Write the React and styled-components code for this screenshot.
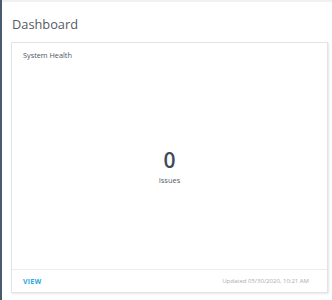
import styled, { createGlobalStyle } from 'styled-components'

const Global = createGlobalStyle`
  html, body {
    margin: 0;
    padding: 0;
    background: #fff;
    font-family: 'Open Sans', 'Noto Sans', sans-serif;
  }
`

const Page = styled.div`
  display: flex;
  width: 332px;
  height: 300px;
  overflow: hidden;
`

const SideEdge = styled.div`
  width: 2px;
  flex-shrink: 0;
  background: #4b5b6e;
`

const Main = styled.div`
  flex: 1;
  display: flex;
  flex-direction: column;
  border-top: 2px solid #f1f1f1;
  padding: 0 4px 7px 9px;
`

const Title = styled.h1`
  margin: 0;
  padding: 14px 0 0 1px;
  height: 26px;
  font-size: 12.8px;
  line-height: 17px;
  font-weight: 400;
  color: #555b63;
`

const Card = styled.section`
  flex: 1;
  display: flex;
  flex-direction: column;
  border: 1px solid #e4e4e4;
  box-shadow: 1px 1px 2px rgba(0, 0, 0, 0.1);
  background: #fff;
`

const CardBody = styled.div`
  flex: 1;
  display: flex;
  flex-direction: column;
  padding: 7px 11px;
`

const CardTitle = styled.div`
  font-size: 7.3px;
  line-height: 10px;
  color: #4d5560;
`

const Metric = styled.div`
  flex: 1;
  display: flex;
  flex-direction: column;
  align-items: center;
  justify-content: center;
  padding-top: 8px;
`

const Value = styled.div`
  font-size: 21px;
  font-weight: 600;
  line-height: 29px;
  color: #3e4a5a;
`

const Label = styled.div`
  font-size: 7.5px;
  line-height: 10px;
  color: #555d68;
`

const Footer = styled.div`
  display: flex;
  align-items: center;
  justify-content: space-between;
  height: 22px;
  padding: 0 18px 0 11px;
  border-top: 1px solid #ececec;
`

const ViewLink = styled.a`
  font-size: 7px;
  font-weight: 700;
  color: #2aa9e0;
  text-decoration: none;
  letter-spacing: 0.2px;
`

const Updated = styled.span`
  font-size: 6px;
  color: #a8acb0;
`

export default function App() {
  return (
    <Page>
      <Global />
      <SideEdge />
      <Main>
        <Title>Dashboard</Title>
        <Card>
          <CardBody>
            <CardTitle>System Health</CardTitle>
            <Metric>
              <Value>0</Value>
              <Label>Issues</Label>
            </Metric>
          </CardBody>
          <Footer>
            <ViewLink href="#">VIEW</ViewLink>
            <Updated>Updated 05/30/2020, 10:21 AM</Updated>
          </Footer>
        </Card>
      </Main>
    </Page>
  )
}
